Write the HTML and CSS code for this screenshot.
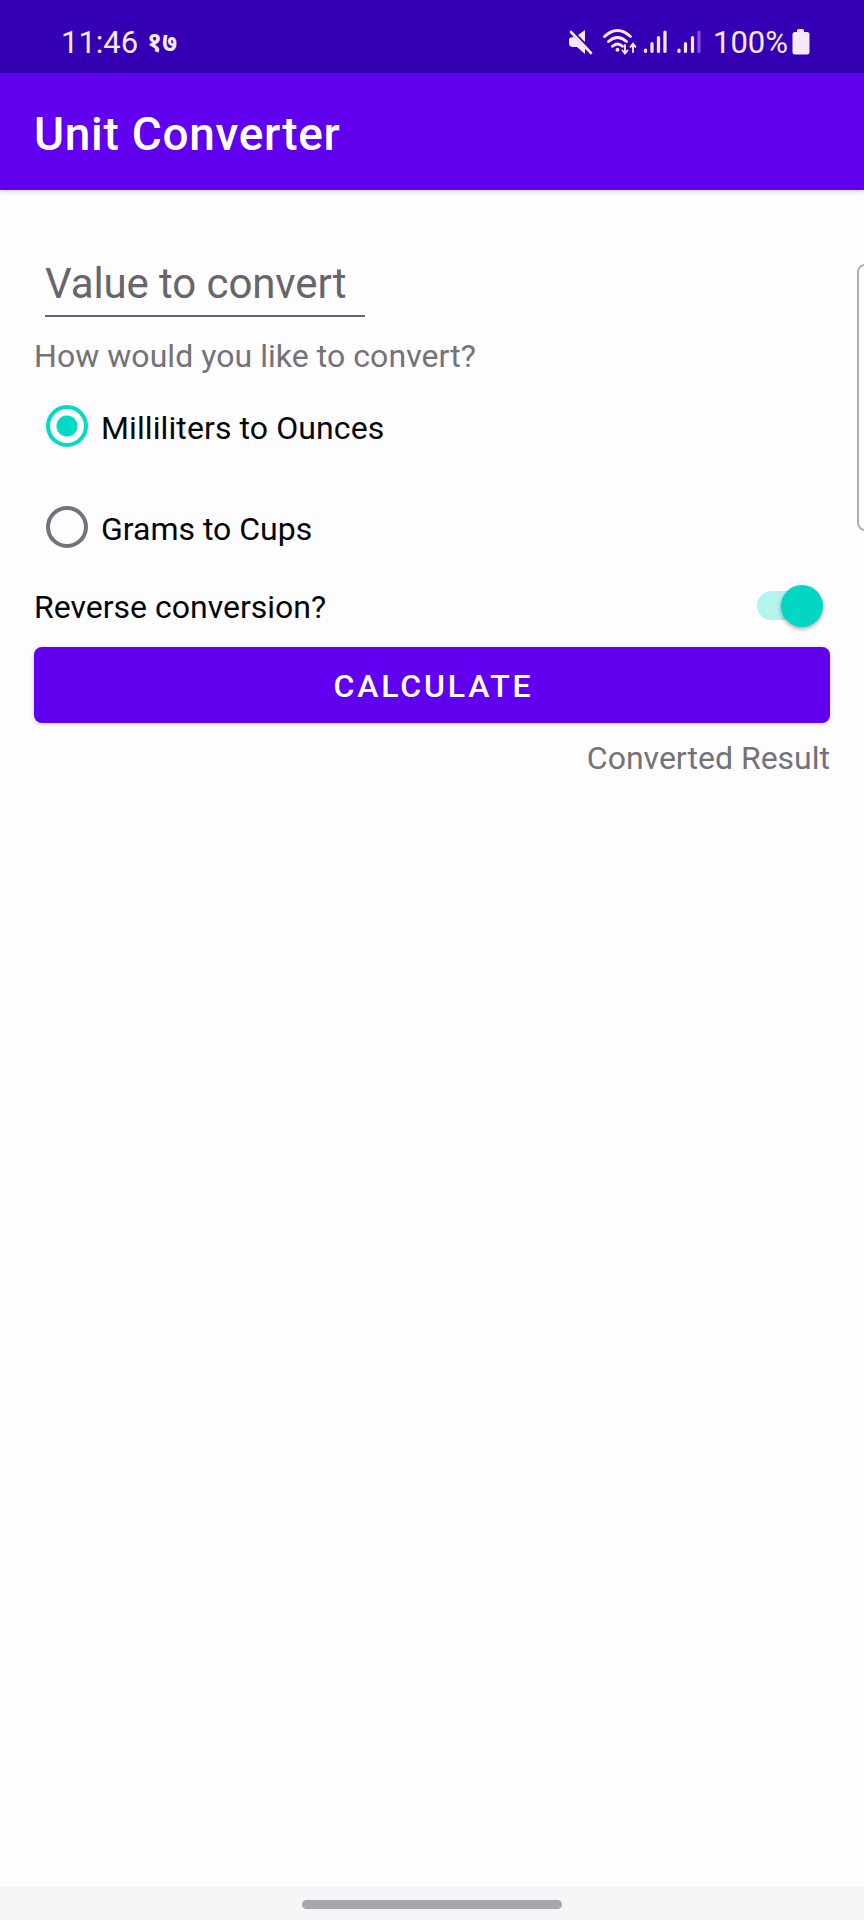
FILE: index.html
```
<!DOCTYPE html>
<html lang="en">
<head>
<meta charset="utf-8">
<title>Unit Converter</title>
<link rel="stylesheet" href="styles.css">
</head>
<body>
<div class="screen">
  <header class="status">
    <div class="clock">11:46</div>
    <div class="date">१७</div>
    <svg class="status-icons" width="160" height="32" viewBox="0 0 160 32" fill="none" stroke="#f6e9ff" stroke-linecap="round">
      <path d="M17 1v12L10 6zM1 10q1-2 5-2l11 11v6L9 18H5q-4 0-4-4z" fill="#f6e9ff" stroke="none"/>
      <path d="M3 3l20 21" stroke-width="2.600"/>
      <path d="M36.500 7.500q13-12 26 0M40.500 12.500q9-8 18 0M44.500 17.200q5-4.500 10 0" stroke-width="2.800"/>
      <circle cx="49.500" cy="20.800" r="2" fill="#f6e9ff" stroke="none"/>
      <path d="M57 16v8M54.500 21.500l2.500 3 2.500-3M65 23v-8M62.500 17.800l2.500-3 2.500 3" stroke-width="1.900"/>
      <path d="M77.500 21v1.500M84 14.500v8M90.500 8.500v14M97 3v19.500M111 21v1.500M117.500 14.500v8M124.500 8.500v14" stroke-width="3.200"/>
      <path d="M131 3v19.500" stroke="#8a4be0" stroke-width="3.200"/>
    </svg>
    <div class="percent">100%</div>
    <svg class="battery" width="18" height="27" viewBox="0 0 18 27"><path d="M5 1.500Q5 0 6.500 0h4Q12 0 12 1.500V3h3q2.500 0 2.500 2.500V23q0 2.500-2.500 2.500H3Q.5 25.500.5 23V5.500Q.5 3 3 3h2z" fill="#f6e9ff"/></svg>
  </header>
  <div class="appbar"><h1 class="title">Unit Converter</h1></div>
  <main class="content">
    <div class="field"><span class="hint">Value to convert</span></div>
    <p class="question">How would you like to convert?</p>
    <div class="option"><span class="radio checked"></span><span class="label-wide">Milliliters to Ounces</span></div>
    <div class="option"><span class="radio"></span><span>Grams to Cups</span></div>
    <div class="reverse"><span class="reverse-label">Reverse conversion?</span><span class="switch"><span class="thumb"></span></span></div>
    <button class="calculate">CALCULATE</button>
    <p class="result">Converted Result</p>
  </main>
  <footer class="nav"><span class="pill"></span></footer>
  <div class="edge-handle"></div>
</div>
</body>
</html>
```
FILE: styles.css
```
* { box-sizing: border-box; }
body { margin: 0; font-family: Roboto, "Noto Sans", sans-serif; font-size: 32px; line-height: 40px; color: #050505; }
.screen { position: relative; display: flex; flex-direction: column; width: 864px; height: 1920px; overflow: hidden; background: #fdfcfe; }
.status { display: flex; align-items: flex-start; height: 73px; padding: 22px 0 0 61px; background: #3500b3; color: #f6e9ff; white-space: nowrap; }
.clock { width: 86px; font-size: 31px; line-height: 42px; }
.date { width: 421px; font-size: 27px; line-height: 40px; font-weight: 700; }
.status-icons { flex: none; margin: 7px -15px 0 0; }
.percent { width: 79px; font-size: 31px; line-height: 42px; }
.battery { margin-top: 7px; }
.appbar { height: 117px; padding: 33px 34px 0; background: #6000ee; box-shadow: 0 1px 5px #0003; }
.title { margin: 0; font-size: 46px; line-height: 56px; font-weight: 500; letter-spacing: 0.7px; color: #fff; white-space: nowrap; }
.content { flex: 1; padding: 66px 34px 0 33px; }
.field { width: 320px; height: 61px; margin-left: 12px; padding-top: 1px; border-bottom: 2px solid #68656a; font-size: 42px; line-height: 54px; letter-spacing: -0.1px; color: #68656a; white-space: nowrap; }
.question { margin: 19px 0 0 1px; letter-spacing: 0.05px; color: #747277; }
.option { display: flex; gap: 13px; height: 101px; padding: 32px 0 0 13px; }
.label-wide { letter-spacing: 0.1px; }
.radio { width: 42px; height: 42px; margin-top: -3px; border: 4.500px solid #747277; border-radius: 50%; }
.checked { border-color: #03dac5; background: radial-gradient(circle, #03dac5 10px, transparent 11px); }
.reverse { display: flex; justify-content: space-between; height: 69px; padding-top: 9px; }
.reverse-label { margin-left: 1px; }
.switch { display: flex; justify-content: flex-end; align-items: center; width: 66px; height: 29px; margin: 4px 7px 0 0; border-radius: 15px; background: #b3f4ed; }
.thumb { width: 42px; height: 42px; border-radius: 50%; background: #03d6c2; box-shadow: 0 2px 4px #0005; }
.calculate { display: block; width: 796px; height: 76px; margin-left: 1px; padding: 1px 0 0 3px; border: 0; border-radius: 8px; background: #6000ee; color: #fff; font: 500 32px/40px Roboto, sans-serif; letter-spacing: 2.8px; box-shadow: 0 1px 4px #0003; }
.result { margin: 15px 0 0; text-align: right; color: #747277; }
.nav { display: flex; justify-content: center; height: 33px; padding-top: 13px; background: #f5f5f7; }
.pill { width: 260px; height: 9px; border-radius: 5px; background: #a9a5aa; }
.edge-handle { position: absolute; top: 264px; right: -13px; width: 20px; height: 267px; border: 2px solid #b0afb2; border-radius: 8px; background: #fefefe; }
```
